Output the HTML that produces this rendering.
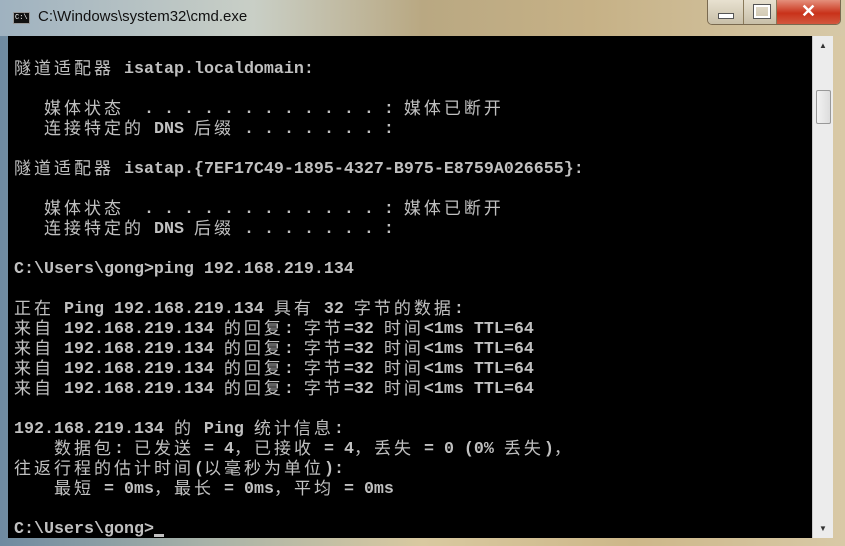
<!DOCTYPE html>
<html><head><meta charset="utf-8">
<style>
html,body{margin:0;padding:0;width:845px;height:546px;overflow:hidden}
body{background:linear-gradient(90deg,#6f8aa0 0%,#a9b3a8 25%,#d9c9a0 50%,#cdb789 75%,#d8c9a6 100%);position:relative;font-family:"Liberation Sans",sans-serif}
.title{position:absolute;left:0;top:0;width:845px;height:36px;background:linear-gradient(90deg,#9fb2c0 0%,#c9cfc6 30%,#b9a882 50%,#c6b186 70%,#d7c9a8 100%)}
.ttext{position:absolute;left:38px;top:8px;font-size:15px;color:#111}
.ico{position:absolute;left:13px;top:12px;width:17px;height:12px;background:#111;border:1px solid #999;box-sizing:border-box;color:#fff;font-size:7px;line-height:10px;padding-left:1px;font-family:"Liberation Mono",monospace}
.btns{position:absolute;left:707px;top:0;width:132px;height:24px;border:1px solid #7a6a50;border-top:none;border-radius:0 0 5px 5px;overflow:hidden;display:flex}
.btns div{height:24px;box-sizing:border-box;border-right:1px solid #8a7a5a;background:linear-gradient(#e8e1d0,#c8bfa8)}
.b1{width:36px;position:relative}.b2{width:33px;position:relative}.b3{flex:1;background:linear-gradient(#e4907c,#c9321a 55%,#d2583e)!important;color:#fff;font-weight:bold;font-size:18px;text-align:center;line-height:23px;border:none!important}
.b1:after{content:"";position:absolute;left:10px;top:13px;width:14px;height:4px;background:#fff;border:1px solid #555}
.b2:after{content:"";position:absolute;left:10px;top:5px;width:12px;height:9px;border:2px solid #fff;outline:1px solid #555}
.con{position:absolute;left:8px;top:36px;width:804px;height:502px;background:#000;overflow:hidden}
.sb{position:absolute;left:812px;top:36px;width:20px;height:502px;background:#ececec;border-left:1px solid #ccc}
.thumb{position:absolute;left:3px;top:54px;width:15px;height:34px;background:linear-gradient(90deg,#f2f2f2,#ddd);border:1px solid #999;border-radius:2px;box-sizing:border-box}
.ar{position:absolute;left:6px;font-size:8px;color:#333}
.t{position:absolute;left:6px;top:4px;color:#c0c0c0;font-family:"Liberation Mono",monospace;font-size:16.67px;font-weight:bold;white-space:pre}
.t div{height:20px;line-height:20px;overflow:visible}
b{font-weight:normal;font-family:"Noto Sans CJK SC","WenQuanYi Zen Hei",sans-serif;font-size:17px;letter-spacing:3px;line-height:20px;vertical-align:top;display:inline-block;height:20px;position:relative;top:-3px}
.cur{display:inline-block;width:10px;height:3px;background:#c0c0c0;vertical-align:-4px}
</style></head><body>
<div class="title"><div class="ico">C:\</div><div class="ttext">C:\Windows\system32\cmd.exe</div></div>
<div class="btns"><div class="b1"></div><div class="b2"></div><div class="b3">✕</div></div>
<div class="con"><div class="t"><div> </div><div><b>隧道适配器</b> isatap.localdomain:</div><div> </div><div>   <b>媒体状态</b>  . . . . . . . . . . . . : <b>媒体已断开</b></div><div>   <b>连接特定的</b> DNS <b>后缀</b> . . . . . . . :</div><div> </div><div><b>隧道适配器</b> isatap.{7EF17C49-1895-4327-B975-E8759A026655}:</div><div> </div><div>   <b>媒体状态</b>  . . . . . . . . . . . . : <b>媒体已断开</b></div><div>   <b>连接特定的</b> DNS <b>后缀</b> . . . . . . . :</div><div> </div><div>C:\Users\gong&gt;ping 192.168.219.134</div><div> </div><div><b>正在</b> Ping 192.168.219.134 <b>具有</b> 32 <b>字节的数据</b>:</div><div><b>来自</b> 192.168.219.134 <b>的回复</b>: <b>字节</b>=32 <b>时间</b>&lt;1ms TTL=64</div><div><b>来自</b> 192.168.219.134 <b>的回复</b>: <b>字节</b>=32 <b>时间</b>&lt;1ms TTL=64</div><div><b>来自</b> 192.168.219.134 <b>的回复</b>: <b>字节</b>=32 <b>时间</b>&lt;1ms TTL=64</div><div><b>来自</b> 192.168.219.134 <b>的回复</b>: <b>字节</b>=32 <b>时间</b>&lt;1ms TTL=64</div><div> </div><div>192.168.219.134 <b>的</b> Ping <b>统计信息</b>:</div><div>    <b>数据包</b>: <b>已发送</b> = 4<b>，已接收</b> = 4<b>，丢失</b> = 0 (0% <b>丢失</b>)<b>，</b></div><div><b>往返行程的估计时间</b>(<b>以毫秒为单位</b>):</div><div>    <b>最短</b> = 0ms<b>，最长</b> = 0ms<b>，平均</b> = 0ms</div><div> </div><div>C:\Users\gong&gt;<span class="cur"></span></div></div></div>
<div class="sb"><div class="ar" style="top:5px">▲</div><div class="thumb"></div><div class="ar" style="bottom:5px">▼</div></div>
</body></html>
